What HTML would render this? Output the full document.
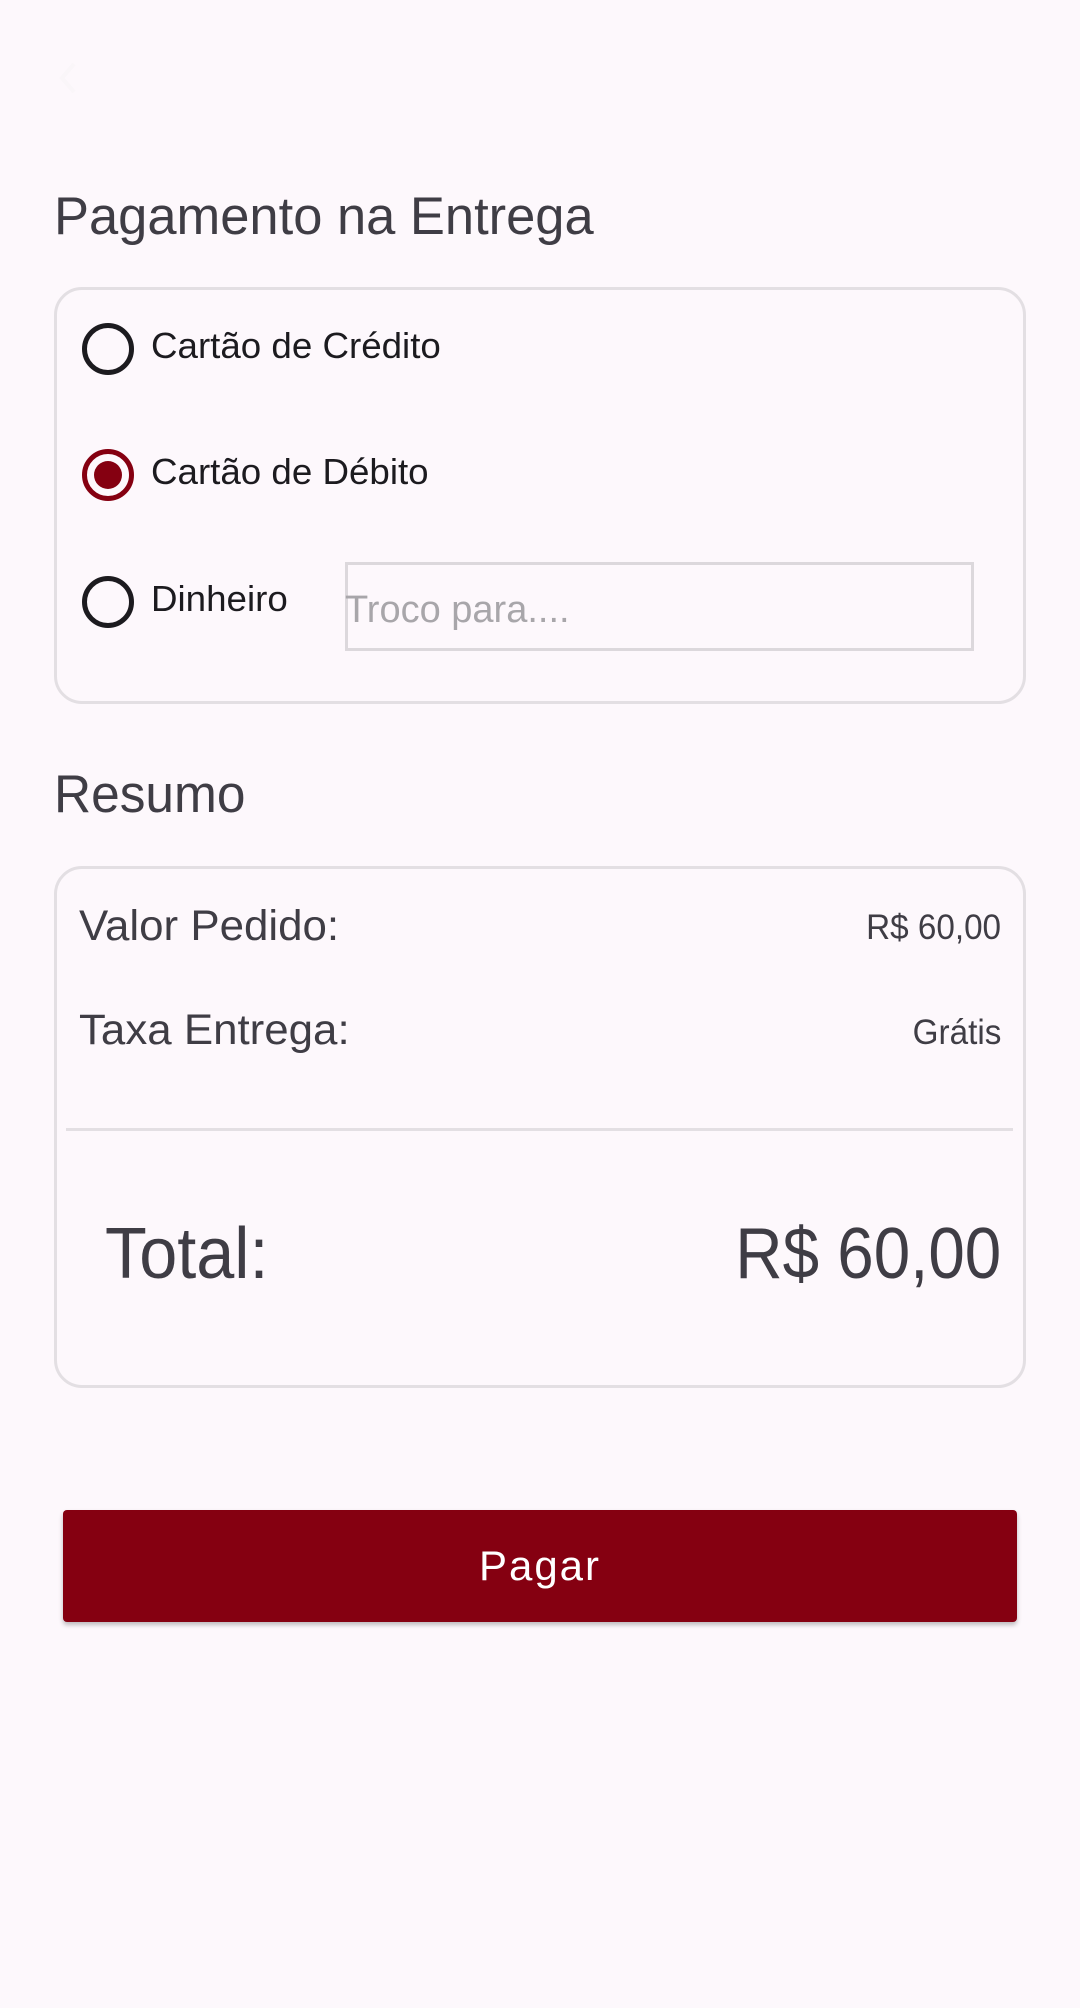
<!DOCTYPE html>
<html><head><meta charset="utf-8"><style>
html,body{margin:0;padding:0}
body{width:1080px;height:2008px;background:#fdf8fc;position:relative;overflow:hidden;font-family:"Liberation Sans",sans-serif}
.t{position:absolute;white-space:nowrap;line-height:1}
.l{transform-origin:left center}
.r{transform-origin:right center;text-align:right}
.card{position:absolute;left:54px;width:972px;border:3px solid #e3dfe3;border-radius:28px;box-sizing:border-box;background:#fdf8fc}
.radio{position:absolute;left:82px;width:52px;height:52px;border:5px solid #1c1b1f;border-radius:50%;box-sizing:border-box}
</style></head><body>
<svg style="position:absolute;left:56px;top:58px" width="24" height="40" viewBox="0 0 24 40"><path d="M18 6 L6 20 L18 34" fill="none" stroke="#faf6f9" stroke-width="4"/></svg>

<div class="t l" style="left:54px;top:190px;font-size:53px;color:#3f3d45;transform:scaleX(0.99)">Pagamento na Entrega</div>

<div class="card" style="top:287px;height:417px"></div>
<div class="radio" style="top:323px"></div>
<div class="t l" style="left:151px;top:328px;font-size:36px;color:#1c1b1f;transform:scaleX(1.02)">Cartão de Crédito</div>
<div class="radio" style="top:449px;border-color:#850011"></div>
<div style="position:absolute;left:94px;top:461px;width:28px;height:28px;border-radius:50%;background:#850011"></div>
<div class="t l" style="left:151px;top:454px;font-size:36px;color:#1c1b1f;transform:scaleX(1.02)">Cartão de Débito</div>
<div class="radio" style="top:576px"></div>
<div class="t l" style="left:151px;top:581px;font-size:36px;color:#1c1b1f;transform:scaleX(1.02)">Dinheiro</div>
<div style="position:absolute;left:345px;top:562px;width:629px;height:89px;border:3px solid #dcd8dc;box-sizing:border-box"></div>
<div class="t l" style="left:345px;top:591px;font-size:38px;color:#a8a6aa">Troco para....</div>

<div class="t l" style="left:54px;top:768px;font-size:53px;color:#3f3d45;transform:scaleX(0.97)">Resumo</div>

<div class="card" style="top:866px;height:522px"></div>
<div class="t l" style="left:79px;top:905px;font-size:43px;color:#3f3d45;transform:scaleX(1.02)">Valor Pedido:</div>
<div class="t r" style="right:79px;top:910px;font-size:35px;color:#3f3d45;transform:scaleX(0.95)">R$ 60,00</div>
<div class="t l" style="left:79px;top:1009px;font-size:43px;color:#3f3d45;transform:scaleX(1.02)">Taxa Entrega:</div>
<div class="t r" style="right:79px;top:1015px;font-size:35px;color:#3f3d45;transform:scaleX(0.95)">Grátis</div>
<div style="position:absolute;left:66px;top:1128px;width:947px;height:3px;background:#e3dfe3"></div>
<div class="t l" style="left:105px;top:1218px;font-size:72px;color:#3f3d45;transform:scaleX(0.95)">Total:</div>
<div class="t r" style="right:79px;top:1218px;font-size:72px;color:#3f3d45;transform:scaleX(0.91)">R$ 60,00</div>

<div style="position:absolute;left:63px;top:1510px;width:954px;height:112px;background:#850011;border-radius:4px;box-shadow:0 3px 5px rgba(0,0,0,0.25)"></div>
<div class="t" style="left:63px;width:954px;text-align:center;top:1545px;font-size:42px;color:#fff;letter-spacing:2px">Pagar</div>
</body></html>
